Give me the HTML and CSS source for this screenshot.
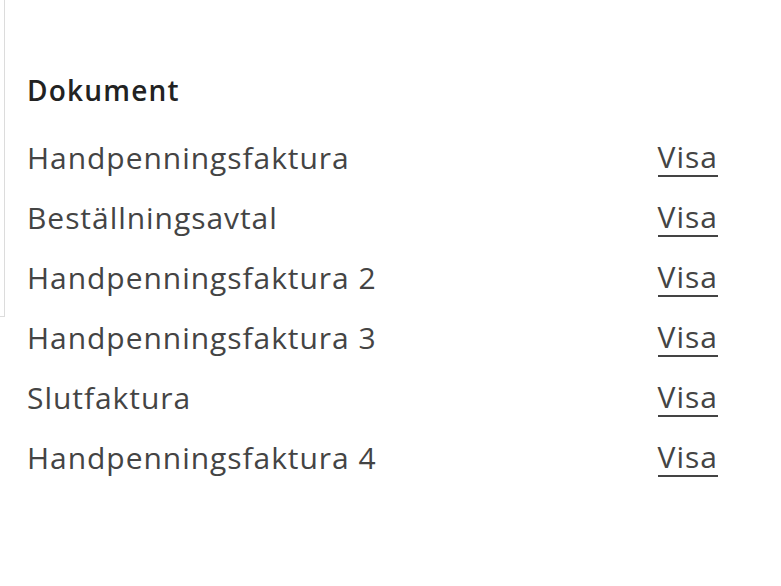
FILE: index.html
```html
<!DOCTYPE html>
<html lang="sv">
<head>
<meta charset="utf-8">
<link rel="stylesheet" href="styles.css">
</head>
<body>
<div class="page">
  <div class="side-box"></div>
  <section class="docs">
    <h2 class="docs-title">Dokument</h2>
    <ul class="doc-list">
      <li class="doc-row"><span class="doc-name">Handpenningsfaktura</span><a class="doc-link" href="#">Visa</a></li>
      <li class="doc-row"><span class="doc-name">Beställningsavtal</span><a class="doc-link" href="#">Visa</a></li>
      <li class="doc-row"><span class="doc-name">Handpenningsfaktura 2</span><a class="doc-link" href="#">Visa</a></li>
      <li class="doc-row"><span class="doc-name">Handpenningsfaktura 3</span><a class="doc-link" href="#">Visa</a></li>
      <li class="doc-row"><span class="doc-name">Slutfaktura</span><a class="doc-link" href="#">Visa</a></li>
      <li class="doc-row"><span class="doc-name">Handpenningsfaktura 4</span><a class="doc-link" href="#">Visa</a></li>
    </ul>
  </section>
</div>
</body>
</html>
```

FILE: styles.css
```css
html, body {
  margin: 0;
  background: #fff;
}
body {
  font-family: "Open Sans", "DejaVu Sans", sans-serif;
  color: #444;
}
.page {
  display: grid;
  grid-template-columns: 5px 1fr;
  width: 781px;
  height: 586px;
}
.side-box {
  height: 317px;
  border-right: 1px solid #dcdcdc;
  border-bottom: 1px solid #dcdcdc;
  box-sizing: border-box;
  align-self: start;
}
.docs {
  padding: 72px 63px 0 22px;
}
.docs-title {
  margin: 0 0 20px;
  font-size: 28px;
  font-weight: 600;
  color: #222;
  line-height: 36px;
  letter-spacing: 1.2px;
}
.doc-list {
  list-style: none;
  margin: 0;
  padding: 0;
}
.doc-row {
  display: flex;
  justify-content: space-between;
  align-items: center;
  height: 60px;
  font-size: 30px;
  letter-spacing: 0.95px;
}
.doc-name {
  line-height: 36px;
}
.doc-link {
  color: #444;
  text-decoration: none;
  line-height: 36px;
  border-bottom: 2px solid #444;
  letter-spacing: 1px;
}
```
